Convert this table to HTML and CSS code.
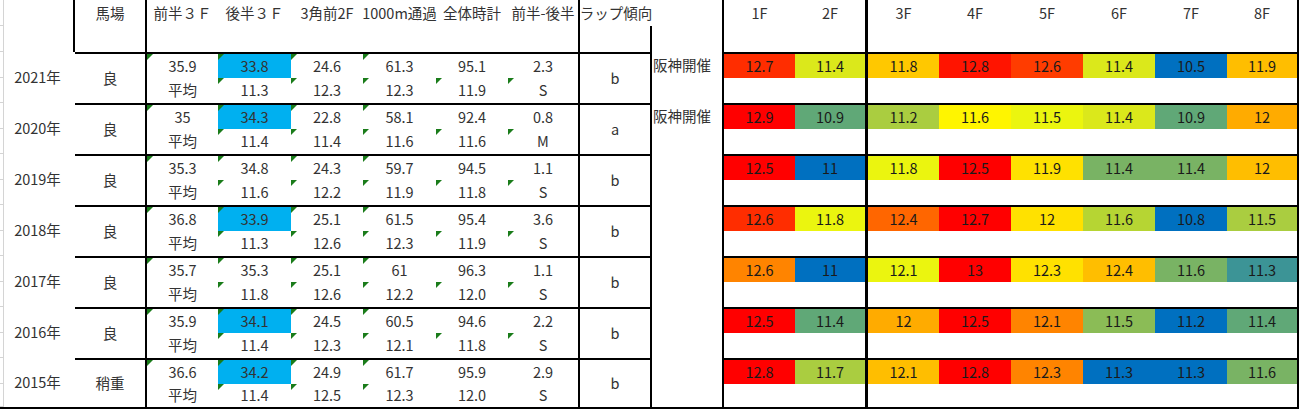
FILE: index.html
```html
<!DOCTYPE html>
<html lang="ja">
<head>
<meta charset="utf-8">
<title>ラップ比較</title>
<link rel="stylesheet" href="styles.css">
</head>
<body>
<div class="sheet">
  <!-- header -->
  <div class="c yr vr"></div>
  <div class="c h2 hd vr">馬場</div>
  <div class="c h2 hd">前半３Ｆ</div>
  <div class="c h2 hd">後半３Ｆ</div>
  <div class="c h2 hd">3角前2F</div>
  <div class="c h2 hd">1000m通過</div>
  <div class="c h2 hd">全体時計</div>
  <div class="c h2 hd vr">前半-後半</div>
  <div class="c hd">ラップ傾向</div>
  <div class="c h2 vr"></div>
  <div class="c h2 hd">1F</div>
  <div class="c h2 hd vr3">2F</div>
  <div class="c h2 hd">3F</div>
  <div class="c h2 hd">4F</div>
  <div class="c h2 hd">5F</div>
  <div class="c h2 hd">6F</div>
  <div class="c h2 hd">7F</div>
  <div class="c h2 hd vr">8F</div>
  <div class="c vr"></div>

  <!-- 2021 -->
  <div class="c yr">2021年</div>
  <div class="c h2 t vr">良</div>
  <div class="c t e">35.9</div>
  <div class="c t e hl">33.8</div>
  <div class="c t e">24.6</div>
  <div class="c t e">61.3</div>
  <div class="c t">95.1</div>
  <div class="c t vr">2.3</div>
  <div class="c h2 t vr">b</div>
  <div class="c h2 note vr">阪神開催</div>
  <div class="c t lap s-ored">12.7</div>
  <div class="c t lap vr3 s-ylg2">11.4</div>
  <div class="c t lap s-gold2">11.8</div>
  <div class="c t lap s-red2">12.8</div>
  <div class="c t lap s-ored2">12.6</div>
  <div class="c t lap s-ylg2">11.4</div>
  <div class="c t lap s-blue">10.5</div>
  <div class="c t lap vr s-gold">11.9</div>
  <div class="c">平均</div>
  <div class="c e">11.3</div>
  <div class="c e">12.3</div>
  <div class="c e">12.3</div>
  <div class="c e">11.9</div>
  <div class="c e vr">S</div>
  <div class="c"></div>
  <div class="c vr3"></div>
  <div class="c"></div>
  <div class="c"></div>
  <div class="c"></div>
  <div class="c"></div>
  <div class="c"></div>
  <div class="c vr"></div>

  <!-- 2020 -->
  <div class="c yr">2020年</div>
  <div class="c h2 t vr">良</div>
  <div class="c t e">35</div>
  <div class="c t e hl">34.3</div>
  <div class="c t e">22.8</div>
  <div class="c t e">58.1</div>
  <div class="c t">92.4</div>
  <div class="c t vr">0.8</div>
  <div class="c h2 t vr">a</div>
  <div class="c h2 note vr">阪神開催</div>
  <div class="c t lap s-red">12.9</div>
  <div class="c t lap vr3 s-gt">10.9</div>
  <div class="c t lap s-lg">11.2</div>
  <div class="c t lap s-yel2">11.6</div>
  <div class="c t lap s-ylg">11.5</div>
  <div class="c t lap s-ylg2">11.4</div>
  <div class="c t lap s-gt">10.9</div>
  <div class="c t lap vr s-amb">12</div>
  <div class="c">平均</div>
  <div class="c e">11.4</div>
  <div class="c e">11.4</div>
  <div class="c e">11.6</div>
  <div class="c e">11.6</div>
  <div class="c e vr">M</div>
  <div class="c"></div>
  <div class="c vr3"></div>
  <div class="c"></div>
  <div class="c"></div>
  <div class="c"></div>
  <div class="c"></div>
  <div class="c"></div>
  <div class="c vr"></div>

  <!-- 2019 -->
  <div class="c yr">2019年</div>
  <div class="c h2 t vr">良</div>
  <div class="c t e">35.3</div>
  <div class="c t e">34.8</div>
  <div class="c t e">24.3</div>
  <div class="c t e">59.7</div>
  <div class="c t">94.5</div>
  <div class="c t vr">1.1</div>
  <div class="c h2 t vr">b</div>
  <div class="c h2 note vr"></div>
  <div class="c t lap s-red">12.5</div>
  <div class="c t lap vr3 s-blue">11</div>
  <div class="c t lap s-ylg">11.8</div>
  <div class="c t lap s-red">12.5</div>
  <div class="c t lap s-yel">11.9</div>
  <div class="c t lap s-g">11.4</div>
  <div class="c t lap s-g">11.4</div>
  <div class="c t lap vr s-gold">12</div>
  <div class="c">平均</div>
  <div class="c e">11.6</div>
  <div class="c e">12.2</div>
  <div class="c e">11.9</div>
  <div class="c e">11.8</div>
  <div class="c e vr">S</div>
  <div class="c"></div>
  <div class="c vr3"></div>
  <div class="c"></div>
  <div class="c"></div>
  <div class="c"></div>
  <div class="c"></div>
  <div class="c"></div>
  <div class="c vr"></div>

  <!-- 2018 -->
  <div class="c yr">2018年</div>
  <div class="c h2 t vr">良</div>
  <div class="c t e">36.8</div>
  <div class="c t e hl">33.9</div>
  <div class="c t e">25.1</div>
  <div class="c t e">61.5</div>
  <div class="c t">95.4</div>
  <div class="c t vr">3.6</div>
  <div class="c h2 t vr">b</div>
  <div class="c h2 note vr"></div>
  <div class="c t lap s-ored">12.6</div>
  <div class="c t lap vr3 s-ylg">11.8</div>
  <div class="c t lap s-org">12.4</div>
  <div class="c t lap s-red">12.7</div>
  <div class="c t lap s-yel">12</div>
  <div class="c t lap s-lg2">11.6</div>
  <div class="c t lap s-blue">10.8</div>
  <div class="c t lap vr s-lg">11.5</div>
  <div class="c">平均</div>
  <div class="c e">11.3</div>
  <div class="c e">12.6</div>
  <div class="c e">12.3</div>
  <div class="c e">11.9</div>
  <div class="c e vr">S</div>
  <div class="c"></div>
  <div class="c vr3"></div>
  <div class="c"></div>
  <div class="c"></div>
  <div class="c"></div>
  <div class="c"></div>
  <div class="c"></div>
  <div class="c vr"></div>

  <!-- 2017 -->
  <div class="c yr">2017年</div>
  <div class="c h2 t vr">良</div>
  <div class="c t e">35.7</div>
  <div class="c t e">35.3</div>
  <div class="c t e">25.1</div>
  <div class="c t e">61</div>
  <div class="c t">96.3</div>
  <div class="c t vr">1.1</div>
  <div class="c h2 t vr">b</div>
  <div class="c h2 note vr"></div>
  <div class="c t lap s-org2">12.6</div>
  <div class="c t lap vr3 s-blue">11</div>
  <div class="c t lap s-ylg">12.1</div>
  <div class="c t lap s-red">13</div>
  <div class="c t lap s-yel">12.3</div>
  <div class="c t lap s-gold">12.4</div>
  <div class="c t lap s-g">11.6</div>
  <div class="c t lap vr s-teal">11.3</div>
  <div class="c">平均</div>
  <div class="c e">11.8</div>
  <div class="c e">12.6</div>
  <div class="c e">12.2</div>
  <div class="c e">12.0</div>
  <div class="c e vr">S</div>
  <div class="c"></div>
  <div class="c vr3"></div>
  <div class="c"></div>
  <div class="c"></div>
  <div class="c"></div>
  <div class="c"></div>
  <div class="c"></div>
  <div class="c vr"></div>

  <!-- 2016 -->
  <div class="c yr">2016年</div>
  <div class="c h2 t vr">良</div>
  <div class="c t e">35.9</div>
  <div class="c t e hl">34.1</div>
  <div class="c t e">24.5</div>
  <div class="c t e">60.5</div>
  <div class="c t">94.6</div>
  <div class="c t vr">2.2</div>
  <div class="c h2 t vr">b</div>
  <div class="c h2 note vr"></div>
  <div class="c t lap s-red">12.5</div>
  <div class="c t lap vr3 s-gt">11.4</div>
  <div class="c t lap s-amb">12</div>
  <div class="c t lap s-red">12.5</div>
  <div class="c t lap s-org2">12.1</div>
  <div class="c t lap s-g2">11.5</div>
  <div class="c t lap s-blue">11.2</div>
  <div class="c t lap vr s-gt">11.4</div>
  <div class="c">平均</div>
  <div class="c e">11.4</div>
  <div class="c e">12.3</div>
  <div class="c e">12.1</div>
  <div class="c e">11.8</div>
  <div class="c e vr">S</div>
  <div class="c"></div>
  <div class="c vr3"></div>
  <div class="c"></div>
  <div class="c"></div>
  <div class="c"></div>
  <div class="c"></div>
  <div class="c"></div>
  <div class="c vr"></div>

  <!-- 2015 -->
  <div class="c yr bb">2015年</div>
  <div class="c h2 t vr bb">稍重</div>
  <div class="c t e">36.6</div>
  <div class="c t e hl">34.2</div>
  <div class="c t e">24.9</div>
  <div class="c t e">61.7</div>
  <div class="c t">95.9</div>
  <div class="c t vr">2.9</div>
  <div class="c h2 t vr bb">b</div>
  <div class="c h2 note vr bb"></div>
  <div class="c t lap s-red">12.8</div>
  <div class="c t lap vr3 s-lg">11.7</div>
  <div class="c t lap s-gold">12.1</div>
  <div class="c t lap s-red">12.8</div>
  <div class="c t lap s-org2">12.3</div>
  <div class="c t lap s-blue">11.3</div>
  <div class="c t lap s-blue">11.3</div>
  <div class="c t lap vr s-g">11.6</div>
  <div class="c bb">平均</div>
  <div class="c e bb">11.4</div>
  <div class="c e bb">12.5</div>
  <div class="c e bb">12.3</div>
  <div class="c bb">12.0</div>
  <div class="c vr bb">S</div>
  <div class="c bb"></div>
  <div class="c vr3 bb"></div>
  <div class="c bb"></div>
  <div class="c bb"></div>
  <div class="c bb"></div>
  <div class="c bb"></div>
  <div class="c bb"></div>
  <div class="c vr bb"></div>
</div>
</body>
</html>
```

FILE: styles.css
```css
* {
  box-sizing: border-box;
  margin: 0;
  padding: 0;
}

html,
body {
  background: #ffffff;
}

body {
  width: 1299px;
  height: 410px;
  overflow: hidden;
  font-family: "Noto Sans CJK JP", "Noto Sans", sans-serif;
  font-size: 14.5px;
  color: #333333;
}

.sheet {
  display: grid;
  grid-template-columns: 75px 72px 71px 73px 72px 73px 72px 72px 72px 72px 71px 73px 71px 72px 72px 72px 72px 72px;
  grid-template-rows: 26px 26px repeat(7, 26px 25px);
}

.c {
  position: relative;
  display: flex;
  align-items: center;
  justify-content: center;
  white-space: nowrap;
  line-height: 1;
}

.h2 {
  grid-row: span 2;
}

.hd {
  align-items: flex-start;
  line-height: 26px;
}

.vr {
  border-right: 2px solid #000000;
}

.vr3 {
  border-right: 3px solid #000000;
}

.t {
  border-top: 2px solid #000000;
}

.bb {
  border-bottom: 2px solid #000000;
}

.e::before {
  content: "";
  position: absolute;
  top: 0;
  left: 0;
  border-top: 6px solid #1a7c1a;
  border-right: 6px solid transparent;
}

.hl {
  background: #00b0f0;
}

.note {
  align-items: flex-start;
  justify-content: flex-start;
  padding-left: 1px;
  line-height: 26px;
}

.yr {
  grid-row: span 2;
  background:
    linear-gradient(#d4d4d4, #d4d4d4) 3px 0 / 1px 100% no-repeat,
    linear-gradient(#d4d4d4, #d4d4d4) 0 25px / 3px 1px no-repeat,
    linear-gradient(#d4d4d4, #d4d4d4) 0 100% / 3px 1px no-repeat;
}

.lap {
  color: #1a1a1a;
}

/* colour scale of the lap times */
.s-red { background: #ff0000; }
.s-red2 { background: #ff1400; }
.s-ored { background: #ff2d00; }
.s-ored2 { background: #ff3c00; }
.s-org { background: #ff6600; }
.s-org2 { background: #ff8400; }
.s-amb { background: #ffab00; }
.s-gold { background: #ffbe00; }
.s-gold2 { background: #ffc800; }
.s-yel { background: #ffe100; }
.s-yel2 { background: #fff500; }
.s-ylg { background: #ebf50f; }
.s-ylg2 { background: #dbe81b; }
.s-lg { background: #aacd40; }
.s-lg2 { background: #b6d533; }
.s-g { background: #79b364; }
.s-g2 { background: #8bbc56; }
.s-gt { background: #60a877; }
.s-teal { background: #3c9496; }
.s-blue { background: #0070c0; }
```
